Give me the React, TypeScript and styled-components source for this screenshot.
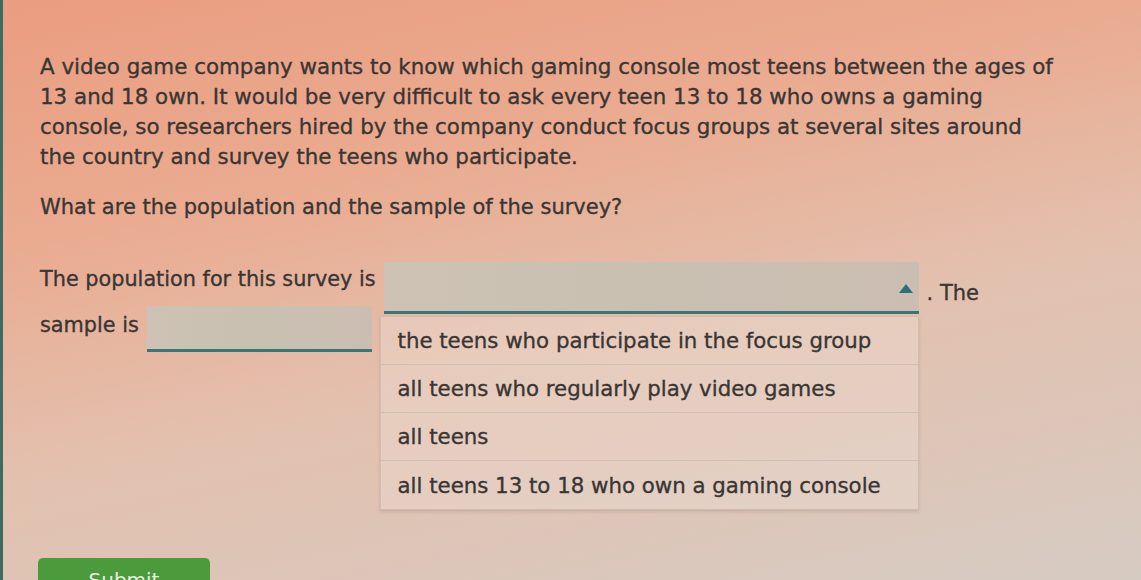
import { FC } from 'react';
import styled, { createGlobalStyle } from 'styled-components';

const GlobalStyle = createGlobalStyle`
  html, body {
    margin: 0;
    padding: 0;
  }
  body {
    width: 1141px;
    height: 580px;
    overflow: hidden;
    font-family: "DejaVu Sans", Verdana, sans-serif;
    color: #3a3634;
    background: linear-gradient(168deg, #ea9d80 0%, #eaab90 30%, #e3c0ae 58%, #d6cbc2 100%);
  }
`;

const options = [
  'the teens who participate in the focus group',
  'all teens who regularly play video games',
  'all teens',
  'all teens 13 to 18 who own a gaming console',
];

const Arrow: FC = () => (
  <svg width="14" height="9" viewBox="0 0 14 9">
    <polygon points="7,0 14,9 0,9" fill="#2f6e7c" />
  </svg>
);

const App: FC = () => {
  return (
    <>
      <GlobalStyle />
      <Page>
        <Paragraph>
          A video game company wants to know which gaming console most teens between the ages of
          <br />
          13 and 18 own. It would be very difficult to ask every teen 13 to 18 who owns a gaming
          <br />
          console, so researchers hired by the company conduct focus groups at several sites around
          <br />
          the country and survey the teens who participate.
        </Paragraph>
        <Question>What are the population and the sample of the survey?</Question>
        <Answer>
          <Row>
            <Label $lift={18}>The population for this survey is</Label>
            <SelectWrap>
              <Select $width={535} $height={52}>
                <Arrow />
              </Select>
              <Menu>
                {options.map((o) => (
                  <Option key={o}>{o}</Option>
                ))}
              </Menu>
            </SelectWrap>
            <Trail>. The</Trail>
          </Row>
          <Row $second>
            <Label $lift={8}>sample is</Label>
            <Select $width={225} $height={46} />
          </Row>
        </Answer>
        <Submit>Submit</Submit>
      </Page>
    </>
  );
};

export default App;

const Page = styled.div`
  position: relative;
  height: 580px;
  padding: 52px 0 0 37px;
  box-sizing: border-box;
  border-left: 3px solid #3f6a62;
  font-size: 21px;
  -webkit-text-stroke: 0.35px #3a3634;
`;

const Paragraph = styled.p`
  margin: 0;
  white-space: nowrap;
  font-size: 21.4px;
  line-height: 30px;
`;

const Question = styled.p`
  margin: 20px 0 0;
  line-height: 30px;
`;

const Answer = styled.div`
  margin-top: 40px;
`;

const Row = styled.div<{ $second?: boolean }>`
  display: flex;
  align-items: center;
  gap: 8px;
  margin-top: ${(p) => (p.$second ? '-8px' : '0')};
`;

const Label = styled.span<{ $lift: number }>`
  padding-bottom: ${(p) => p.$lift}px;
  font-size: 20.8px;
  white-space: nowrap;
`;

const SelectWrap = styled.div`
  position: relative;
`;

const Select = styled.div<{ $width: number; $height: number }>`
  width: ${(p) => p.$width}px;
  height: ${(p) => p.$height}px;
  box-sizing: border-box;
  display: flex;
  align-items: center;
  justify-content: flex-end;
  padding: 4px 6px 0 0;
  background: linear-gradient(90deg, #cdc2b4 0%, #c9c0b2 50%, #cbbdb1 100%);
  border-bottom: 3px solid #3b7577;
`;

const Trail = styled.span`
  margin-left: 0;
  padding-top: 10px;
`;

const Menu = styled.div`
  position: absolute;
  top: 100%;
  left: -4px;
  width: 537px;
  margin-top: 2px;
  background: rgba(238, 222, 212, 0.4);
  border: 1px solid #cdbcb1;
  box-shadow: 0 2px 3px rgba(120, 90, 80, 0.2);
  z-index: 2;
`;

const Option = styled.div`
  height: 48px;
  box-sizing: border-box;
  display: flex;
  align-items: center;
  padding: 0 0 0 17px;
  font-size: 21.3px;
  border-bottom: 1px solid #d0bfb4;

  &:last-child {
    border-bottom: none;
  }
`;

const Submit = styled.div`
  position: absolute;
  left: 35px;
  top: 558px;
  width: 172px;
  height: 44px;
  border-radius: 5px;
  background: #4b9b3c;
  color: #e8efe0;
  -webkit-text-stroke: 0;
  font-size: 20px;
  text-align: center;
  line-height: 44px;
`;
